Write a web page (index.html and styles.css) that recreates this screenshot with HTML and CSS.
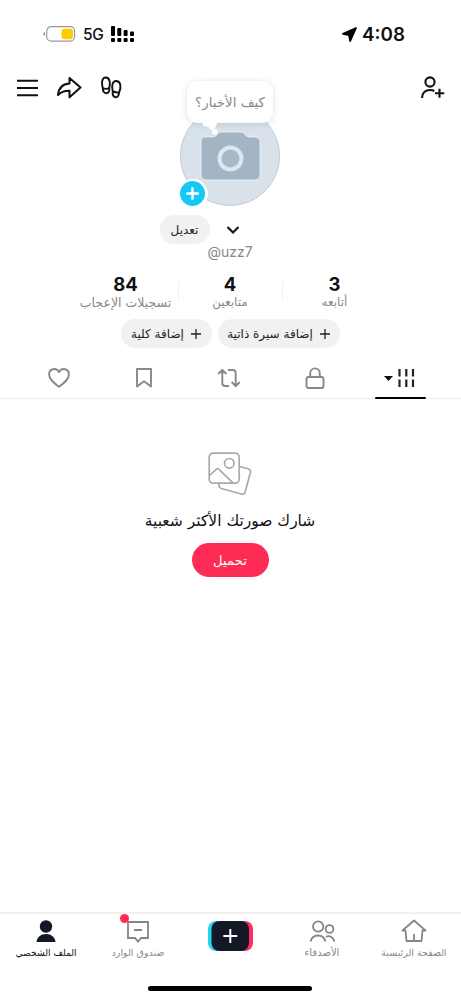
FILE: index.html
```
<!DOCTYPE html>
<html lang="ar">
<head>
<meta charset="utf-8">
<meta name="viewport" content="width=device-width">
<title>الملف الشخصي</title>
<link rel="stylesheet" href="styles.css">
</head>
<body>
<div class="screen">
  <header class="status">
    <div class="status-side">
      <svg width="33" height="16" viewBox="0 0 33 16"><rect x="3.700" y=".7" width="27.900" height="14.400" rx="4.500" fill="#fff" stroke="#999" stroke-width="1.200"/><path d="M1.800 6v4Q.4 9.600.4 8t1.400-2z" fill="#777"/><rect x="18.500" y="2.700" width="11.500" height="10.600" rx="3" fill="#fc0"/></svg>
      <span class="network">5G</span>
      <svg width="24" height="17" viewBox="0 0 24 17"><g fill="#000"><rect x="0" y="0" width="4" height="10" rx="1"/><rect x="6.300" y="2" width="4" height="8" rx="1"/><rect x="12.600" y="4" width="4" height="6" rx="1"/><rect x="19" y="5.500" width="4" height="4.500" rx="1"/><rect x="0" y="12" width="4" height="4" rx="1"/><rect x="6.300" y="12" width="4" height="4" rx="1"/><rect x="12.600" y="12" width="4" height="4" rx="1"/><rect x="19" y="12" width="4" height="4" rx="1"/></g></svg>
    </div>
    <div class="status-side">
      <svg width="15" height="15" viewBox="0 0 15 15"><path d="M14 1 1 6.800l6 1.200 1.200 6z" fill="#000" stroke="#000" stroke-width="1.800" stroke-linejoin="round"/></svg>
      <span class="clock">4:08</span>
    </div>
  </header>

  <div class="toolbar">
    <div class="tools">
      <svg width="22" height="24" viewBox="0 0 22 24"><path d="M0 4.700h21M0 12h21M0 19.300h21" stroke="#111" stroke-width="2"/></svg>
      <svg width="26" height="24" viewBox="0 0 26 24"><path d="M12.500 2v5.600C6 8 1.700 11.600 1 19.200c2.900-3.500 6.500-4.600 11.500-4.500v6.500l11-9.700z" fill="none" stroke="#111" stroke-width="2" stroke-linejoin="round"/></svg>
      <svg class="feet" width="22" height="24" viewBox="0 0 22 24"><g fill="none" stroke="#111" stroke-width="1.900"><path d="M2 12.500C.4 8 .5 1.600 4.700 1.500s4.800 5.500 3.500 10.500M1.900 12.200c2 1 4 .9 6.300 0 .5 3-.6 5-2.900 5s-3.700-2-3.400-5z"/><path d="M11.700 15.300C10.300 10 11.400 4.600 15.600 5s4.800 6.300 2.600 11.200M11.700 15.200c2.300 1.300 4.500 1.500 6.400 1-.1 3-1.500 5.300-3.600 5s-3.200-2.800-2.800-6z"/></g></svg>
    </div>
    <svg width="25" height="24" viewBox="0 0 25 24"><g fill="none" stroke="#111" stroke-width="2.100"><circle cx="10" cy="6" r="4.600"/><path d="M2 22c.2-5 3.500-8 8-8 1.700 0 3 .3 4.300 1M19.500 12.800v9M15 17.300h9.300"/></g></svg>
  </div>

  <section class="profile">
    <div class="avatar">
      <svg width="100" height="100" viewBox="0 0 100 100"><circle cx="50" cy="50" r="49.600" fill="#d9e2eb" stroke="#b7c4d0" stroke-width=".8"/><path d="M25 31h8c4 0 4-5 8-5h20c4 0 4 5 8 5h6a5 5 0 0 1 5 5v33a5 5 0 0 1-5 5H26a5 5 0 0 1-5-5V36q0-5 4-5z" fill="#a3b5c5" stroke="#ecf2f6" stroke-width=".8"/><circle cx="50.500" cy="52.500" r="11" fill="#a8b9c9" stroke="#dce7ef" stroke-width="4"/></svg>
      <div class="thought"><span class="ar" dir="rtl">كيف الأخبار؟</span></div>
      <svg class="tail" width="18" height="14" viewBox="0 0 18 14"><path d="M1 0v5Q6 5 8 8q3 3 5-1l2-4V0z" fill="#fff"/><circle cx="13" cy="11" r="2.800" fill="#fff"/></svg>
      <svg class="add" width="30" height="30" viewBox="0 0 30 30"><circle cx="15" cy="15" r="15" fill="#fff"/><circle cx="14.500" cy="14.500" r="12.500" fill="#16c8f5"/><path d="M14.500 8.300v12.400M8.300 14.500h12.400" stroke="#fff" stroke-width="2.400"/></svg>
    </div>
    <div class="edit-row">
      <button class="pill edit"><span class="ar" dir="rtl">تعديل</span></button>
      <svg width="14" height="10" viewBox="0 0 14 10"><path d="m1.500 2 5.500 5.500L12.500 2" fill="none" stroke="#161616" stroke-width="2.200"/></svg>
    </div>
    <div class="handle">@uzz7</div>
    <div class="stats">
      <div class="stat likes"><b>84</b><span class="ar" dir="rtl">تسجيلات الإعجاب</span></div>
      <div class="stat"><b>4</b><span class="ar" dir="rtl">متابعين</span></div>
      <div class="stat"><b>3</b><span class="ar" dir="rtl">أتابعه</span></div>
    </div>
    <div class="actions">
      <button class="pill college"><span class="ar" dir="rtl">إضافة كلية</span><svg width="10" height="10" viewBox="0 0 10 10"><path d="M5 0v10M0 5h10" stroke="#222" stroke-width="1.300"/></svg></button>
      <button class="pill bio"><span class="ar" dir="rtl">إضافة سيرة ذاتية</span><svg width="10" height="10" viewBox="0 0 10 10"><path d="M5 0v10M0 5h10" stroke="#222" stroke-width="1.300"/></svg></button>
    </div>
  </section>

  <nav class="tabs">
    <div class="tab"><svg width="22" height="20" viewBox="0 0 22 20"><path d="M11 18.700C6 15 1.100 11.400 1.100 6.500c0-6 7-7.200 9.900-2.500C13.900-.7 20.900.5 20.900 6.500c0 4.900-4.900 8.500-9.900 12.200z"/></svg></div>
    <div class="tab"><svg width="18" height="20" viewBox="0 0 18 20"><path d="M2 1h14v17.500l-7-5.200-7 5.200z"/></svg></div>
    <div class="tab"><svg width="24" height="20" viewBox="0 0 24 20"><path d="M5.300 2v13q0 3 3 3H12M1.200 6l4.100-4.200L9.400 6M11 2h4.700q3 0 3 3v13M14.600 14l4.100 4.200 4.100-4.200"/></svg></div>
    <div class="tab"><svg width="20" height="22" viewBox="0 0 20 22"><rect x="1.500" y="10" width="17" height="11" rx="2"/><path d="M5.200 10V6.200a4.800 4.800 0 0 1 9.600 0V10"/></svg></div>
    <div class="tab active"><svg width="32" height="20" viewBox="0 0 32 20"><path d="M0 8h9L4.500 13z" fill="#111" stroke="none"/><path d="M15.500 1v7.500M22.300 1v7.500M29 1v7.500M15.500 11.500V19M22.300 11.500V19M29 11.500V19" stroke="#222" stroke-width="2.200"/></svg></div>
  </nav>

  <main class="empty">
    <svg width="44" height="44" viewBox="0 0 44 44"><g fill="none" stroke="#aaa" stroke-width="1.700"><rect x="1.200" y="1.200" width="30" height="30" rx="4"/><circle cx="21.300" cy="11.300" r="4.800"/><path d="m1.500 23.500 6.700-6.200q1.400-1.200 2.800.1l14 13.500M31.500 14.500l8.600 2.200q3 .8 2.300 3.800l-5.200 19.300q-.8 3-3.800 2.200l-20-5.500q-3-1-2.500-5"/></g></svg>
    <h1><span class="ar" dir="rtl">شارك صورتك الأكثر شعبية</span></h1>
    <button class="upload"><span class="ar" dir="rtl">تحميل</span></button>
  </main>

  <footer class="bottom">
    <div class="item current"><svg width="24" height="26" viewBox="0 0 24 26"><circle cx="12" cy="8.500" r="6.200" fill="#141824"/><path d="M2.500 24c.5-5 4.400-8 9.500-8s9 3 9.500 8z" fill="#141824"/></svg><span class="ar" dir="rtl">الملف الشخصي</span></div>
    <div class="item inbox"><svg width="24" height="26" viewBox="0 0 24 26"><path d="M2 4h20v16h-7l-3 3.500L9 20H2zM8 12h8"/></svg><i class="dot"></i><span class="ar" dir="rtl">صندوق الوارد</span></div>
    <div class="item create"><svg width="46" height="30" viewBox="0 0 46 30"><rect x="1" y="0" width="35" height="30" rx="8" fill="#20d5ec"/><rect x="11" y="0" width="35" height="30" rx="8" fill="#fe2c6a"/><rect x="4.500" y="0" width="37.500" height="30" rx="8" fill="#141824"/><path d="M23.300 8v14M16.300 15h14" stroke="#fff" stroke-width="2"/></svg></div>
    <div class="item friends"><svg width="27" height="26" viewBox="0 0 27 26"><circle cx="9.200" cy="8.500" r="5.200"/><circle cx="20.500" cy="11" r="3.900"/><path d="M1.500 23.500c1-4 4-6 7.500-6s6.500 2 7.500 6M17 18.800c3-1.600 7-.5 8.400 4.700"/></svg><span class="ar" dir="rtl">الأصدقاء</span></div>
    <div class="item home"><svg width="26" height="26" viewBox="0 0 26 26"><path d="m1.500 12.500 11.500-10 11.500 10h-3L20.500 23h-15L4.500 12.500zM13 16v7" stroke-linejoin="round"/></svg><span class="ar" dir="rtl">الصفحة الرئيسية</span></div>
  </footer>
  <div class="home-bar"></div>
</div>
</body>
</html>
```
FILE: styles.css
```
* { box-sizing: border-box; }
body { margin: 0; background: #fff; font-family: Inter, "DejaVu Sans", sans-serif; color: #111; }
svg { display: block; flex: none; }
button { border: 0; padding: 0; margin: 0; color: inherit; }
.screen { width: 461px; height: 1000px; display: flex; flex-direction: column; overflow: hidden; }
.ar { display: block; font-family: "DejaVu Sans", sans-serif; white-space: nowrap; }

.status { height: 68px; display: flex; justify-content: space-between; align-items: center; padding: 0 56px 0 43px; }
.status-side { display: flex; align-items: center; }
.network { font-size: 15.5px; font-weight: 450; margin: 1px 7px 0 7px; width: 21px; letter-spacing: -.3px; }
.clock { font-size: 18.8px; line-height: 20px; font-weight: 600; margin: 2px 0 0 5px; width: 43px; white-space: nowrap; }

.toolbar { height: 38px; display: flex; justify-content: space-between; align-items: center; padding: 2px 16px 0 17px; }
.tools { display: flex; gap: 18px; align-items: center; }

.profile { height: 251px; display: flex; flex-direction: column; align-items: center; padding-right: 1px; }
.avatar { position: relative; width: 100px; height: 100px; }
.thought { position: absolute; left: 7px; top: -25px; width: 86px; height: 42px; border-radius: 11px; background: #fff; box-shadow: 0 1px 7px rgba(0,0,0,.13); display: flex; align-items: center; justify-content: center; color: #888; font-size: 13.4px; }
.tail { position: absolute; left: 22px; top: 15px; }
.add { position: absolute; left: -2px; top: 73px; }
.pill { height: 29px; border-radius: 15px; background: #f1f1f2; display: flex; align-items: center; justify-content: center; gap: 7px; font-size: 12px; color: #222; }
.edit-row { display: flex; align-items: center; gap: 16px; width: 141px; height: 29px; margin-top: 9px; }
.edit { width: 50px; }
.handle { color: #888; font-size: 14px; line-height: 16px; }
.stats { display: grid; grid-template-columns: repeat(3, 104.5px); margin-top: 14px; height: 40px; }
.stat { display: flex; flex-direction: column; align-items: center; position: relative; }
.stat + .stat::before { content: ""; position: absolute; left: 0; top: 8px; height: 18px; width: 1px; background: #f0f0f0; }
.stat b { font-size: 18.5px; line-height: 20px; font-weight: 700; }
.stat span { font-size: 12px; line-height: 17px; color: #888; }
.likes span { font-size: 12.5px; }
.actions { display: flex; gap: 6px; margin-top: 5px; }
.college { width: 91px; }
.bio { width: 122px; }

.tabs { height: 42px; padding: 0 18px 0 16px; display: grid; grid-template-columns: repeat(5, 1fr); border-bottom: 1px solid #eee; }
.tab { display: flex; align-items: center; justify-content: center; position: relative; }
.tab svg { fill: none; stroke: #888; stroke-width: 1.9; stroke-linejoin: round; }
.tab.active::after { content: ""; position: absolute; width: 51px; height: 2px; border-radius: 1px; background: #000; bottom: -1px; }

.empty { flex: 1; padding: 53px 1px 0 0; display: flex; flex-direction: column; align-items: center; }
h1 { margin: 13px 0 0; font-size: 15.5px; line-height: 24px; font-weight: 400; }
.upload { margin-top: 10px; width: 77px; height: 34px; border-radius: 17px; background: #fe2c55; color: #fff; display: flex; align-items: center; justify-content: center; font-size: 13.2px; }

.bottom { height: 74px; border-top: 2px solid #f2f2f3; padding-right: 1px; display: grid; grid-template-columns: repeat(5, 1fr); }
.item { display: flex; flex-direction: column; align-items: center; padding-top: 4px; color: #888; position: relative; font-size: 9.5px; }
.item svg { fill: none; stroke: #84858a; stroke-width: 1.8; }
.item.current svg, .item.create svg { stroke: none; }
.item span { line-height: 14px; margin-top: 2px; }
.item.current { color: #111; font-size: 9.2px; }
.item.friends { font-size: 10px; }
.item.create { padding-top: 7px; }
.dot { position: absolute; left: 28px; top: 0; width: 9px; height: 9px; border-radius: 50%; background: #fe2c55; }
.home-bar { width: 164px; height: 5px; border-radius: 3px; background: #000; margin: 0 149px 9px 148px; }
```
